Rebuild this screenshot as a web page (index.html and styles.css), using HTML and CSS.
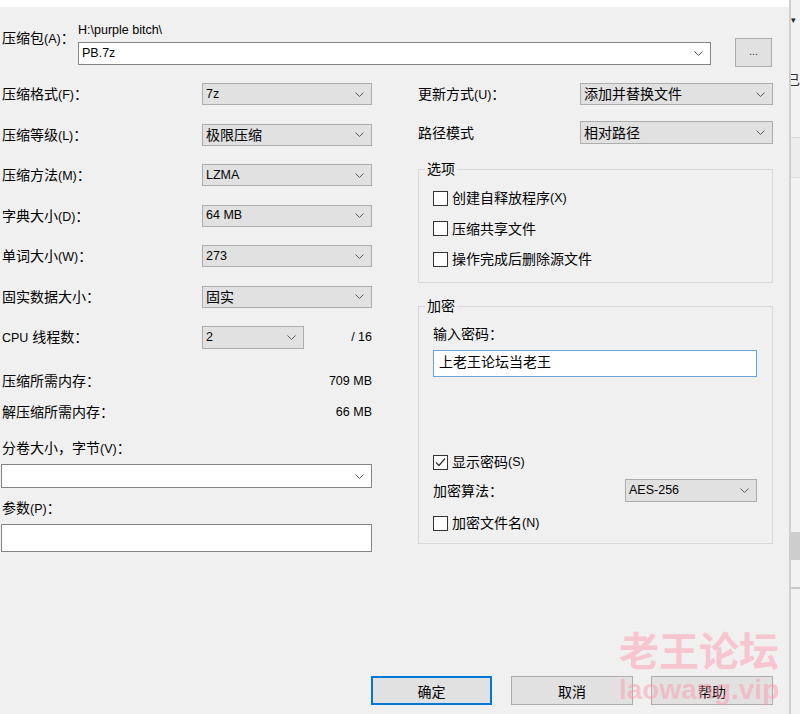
FILE: index.html
```html
<!DOCTYPE html>
<html lang="zh-CN">
<head>
<meta charset="utf-8">
<title>添加到压缩包</title>
<link rel="stylesheet" href="styles.css">
</head>
<body>
<div class="dialog">
  <div class="titlebar"></div>
  <div class="content">
    <div class="archive-row">
      <div class="archive-label">压缩包<span class="en">(A)</span>：</div>
      <div class="archive-field">
        <div class="path en">H:\purple bitch\</div>
        <div class="combo"><span class="en">PB.7z</span><svg class="chev" width="9" height="5" viewBox="0 0 9 5"><polyline points="0.5,0.5 4.5,4.5 8.5,0.5"/></svg></div>
      </div>
      <button class="browse">...</button>
    </div>

    <div class="columns">
      <div class="left">
        <div class="settings">
          <div class="lbl">压缩格式<span class="en">(F)</span>：</div>
          <div class="select"><span class="en">7z</span><svg class="chev" width="9" height="5" viewBox="0 0 9 5"><polyline points="0.5,0.5 4.5,4.5 8.5,0.5"/></svg></div>
          <div class="lbl">压缩等级<span class="en">(L)</span>：</div>
          <div class="select"><span>极限压缩</span><svg class="chev" width="9" height="5" viewBox="0 0 9 5"><polyline points="0.5,0.5 4.5,4.5 8.5,0.5"/></svg></div>
          <div class="lbl">压缩方法<span class="en">(M)</span>：</div>
          <div class="select"><span class="en">LZMA</span><svg class="chev" width="9" height="5" viewBox="0 0 9 5"><polyline points="0.5,0.5 4.5,4.5 8.5,0.5"/></svg></div>
          <div class="lbl">字典大小<span class="en">(D)</span>：</div>
          <div class="select"><span class="en">64 MB</span><svg class="chev" width="9" height="5" viewBox="0 0 9 5"><polyline points="0.5,0.5 4.5,4.5 8.5,0.5"/></svg></div>
          <div class="lbl">单词大小<span class="en">(W)</span>：</div>
          <div class="select"><span class="en">273</span><svg class="chev" width="9" height="5" viewBox="0 0 9 5"><polyline points="0.5,0.5 4.5,4.5 8.5,0.5"/></svg></div>
          <div class="lbl">固实数据大小：</div>
          <div class="select"><span>固实</span><svg class="chev" width="9" height="5" viewBox="0 0 9 5"><polyline points="0.5,0.5 4.5,4.5 8.5,0.5"/></svg></div>
          <div class="lbl"><span class="en">CPU</span> 线程数：</div>
          <div class="cpu">
            <div class="select small"><span class="en">2</span><svg class="chev" width="9" height="5" viewBox="0 0 9 5"><polyline points="0.5,0.5 4.5,4.5 8.5,0.5"/></svg></div>
            <span class="en">/ 16</span>
          </div>
        </div>

        <div class="mem-row first"><span>压缩所需内存：</span><span class="en">709 MB</span></div>
        <div class="mem-row second"><span>解压缩所需内存：</span><span class="en">66 MB</span></div>

        <div class="vol-label">分卷大小，字节<span class="en">(V)</span>：</div>
        <div class="combo vol"><span></span><svg class="chev" width="9" height="5" viewBox="0 0 9 5"><polyline points="0.5,0.5 4.5,4.5 8.5,0.5"/></svg></div>
        <div class="param-label">参数<span class="en">(P)</span>：</div>
        <div class="textbox param"></div>
      </div>

      <div class="right">
        <div class="right-row">
          <span>更新方式<span class="en">(U)</span>：</span>
          <div class="select wide"><span>添加并替换文件</span><svg class="chev" width="9" height="5" viewBox="0 0 9 5"><polyline points="0.5,0.5 4.5,4.5 8.5,0.5"/></svg></div>
        </div>
        <div class="right-row second">
          <span>路径模式</span>
          <div class="select wide"><span>相对路径</span><svg class="chev" width="9" height="5" viewBox="0 0 9 5"><polyline points="0.5,0.5 4.5,4.5 8.5,0.5"/></svg></div>
        </div>

        <fieldset class="options">
          <legend>选项</legend>
          <div class="check-row first"><span class="box"></span>创建自释放程序<span class="en">(X)</span></div>
          <div class="check-row"><span class="box"></span>压缩共享文件</div>
          <div class="check-row"><span class="box"></span>操作完成后删除源文件</div>
        </fieldset>

        <fieldset class="encrypt">
          <legend>加密</legend>
          <div class="pw-label">输入密码：</div>
          <div class="textbox pw">上老王论坛当老王</div>
          <div class="check-row show"><span class="box"><svg width="13" height="13" viewBox="0 0 13 13"><polyline points="2,6.5 5,9.5 11,2.5"/></svg></span>显示密码<span class="en">(S)</span></div>
          <div class="algo-row">
            <span>加密算法：</span>
            <div class="select algo"><span class="en">AES-256</span><svg class="chev" width="9" height="5" viewBox="0 0 9 5"><polyline points="0.5,0.5 4.5,4.5 8.5,0.5"/></svg></div>
          </div>
          <div class="check-row names"><span class="box"></span>加密文件名<span class="en">(N)</span></div>
        </fieldset>
      </div>
    </div>

    <div class="buttons">
      <button class="btn ok">确定</button>
      <button class="btn">取消</button>
      <button class="btn">帮助</button>
    </div>
  </div>
</div>

<div class="side">
  <div class="side-top">
    <div class="tri">▾</div>
    <div class="cut">已表</div>
  </div>
  <div class="side-band"></div>
  <div class="side-mid"></div>
  <div class="thumb"></div>
  <div class="side-low"></div>
</div>

<div class="watermark">
  <div class="wm-cn">老王论坛</div>
  <div class="wm-en">laowang.vip</div>
</div>
</body>
</html>
```

FILE: styles.css
```css
* { box-sizing: border-box; }

html, body { margin: 0; }

body {
  width: 800px;
  height: 714px;
  overflow: hidden;
  position: relative;
  display: flex;
  background: #f0f0f0;
  color: #000;
  font-family: "Liberation Sans", "Noto Sans CJK SC", sans-serif;
  font-size: 14px;
  line-height: 18px;
}

.en { font-size: 12.5px; line-height: 1; }

.dialog { width: 789px; flex: none; }

.titlebar { height: 7px; background: #fff; }

.content { padding: 15px 16px 0 0; }

/* archive row */
.archive-row { display: flex; align-items: flex-start; }
.archive-label { width: 78px; height: 25px; padding: 7px 0 0 2px; }
.archive-field { width: 633px; }
.path { height: 16px; line-height: 16px; margin-bottom: 4px; }

.combo {
  height: 23px;
  background: #fff;
  border: 1px solid #858585;
  display: flex;
  align-items: center;
  justify-content: space-between;
  padding: 0 7px 0 3px;
}

.chev { flex: none; }
.chev polyline { fill: none; stroke: #5a5a5a; stroke-width: 1; }

.browse {
  margin: 16px 0 0 24px;
  width: 37px;
  height: 29px;
  padding: 0 0 4px;
  background: #e1e1e1;
  border: 1px solid #adadad;
  font-family: "Liberation Sans", sans-serif;
  font-size: 11px;
  color: #333;
}

/* columns */
.columns { display: flex; margin-top: 16px; }

.left { width: 371px; margin-left: 1px; flex: none; }

.settings {
  display: grid;
  grid-template-columns: 201px 170px;
  grid-auto-rows: 22px;
  row-gap: 18.5px;
  align-items: center;
}

.lbl { padding-left: 1px; height: 18px; }

.select {
  height: 22px;
  background: #e1e1e1;
  border: 1px solid #adadad;
  display: flex;
  align-items: center;
  justify-content: space-between;
  padding: 0 7px 0 3px;
  white-space: nowrap;
}

.cpu { display: flex; align-items: center; justify-content: space-between; }
.select.small { width: 102px; height: 23px; }

.mem-row { display: flex; align-items: center; justify-content: space-between; height: 18px; padding-left: 1px; }
.mem-row.first { margin-top: 24px; }
.mem-row.second { margin-top: 13px; }

.vol-label { margin-top: 18px; height: 18px; padding-left: 1px; }
.combo.vol { margin-top: 7px; height: 24px; }
.param-label { margin-top: 11px; height: 18px; padding-left: 1px; }

.textbox { background: #fff; border: 1px solid #858585; }
.textbox.param { margin-top: 7px; height: 28px; }

/* right column */
.right { width: 355px; margin-left: 46px; flex: none; }

.right-row {
  display: flex;
  align-items: center;
  justify-content: space-between;
  height: 22px;
}
.right-row.second { margin-top: 16px; height: 23px; }
.select.wide { width: 193px; height: 100%; }

fieldset {
  margin: 0;
  min-width: 0;
  border: 1px solid #d9d9d9;
}

legend {
  margin-left: -8px;
  padding: 0 2px;
  height: 18px;
  line-height: 18px;
}

.options { margin-top: 16px; padding: 0 0 14px 14px; }

.check-row {
  display: flex;
  align-items: center;
  height: 18px;
  margin-top: 12.5px;
}
.check-row.first { margin-top: 11px; }

.box {
  width: 15px;
  height: 15px;
  flex: none;
  margin-right: 4px;
  background: #fff;
  border: 1px solid #333;
  display: flex;
  align-items: center;
  justify-content: center;
}
.box svg polyline { fill: none; stroke: #333; stroke-width: 1.2; }

.encrypt { margin-top: 14px; padding: 0 15px 11px 14px; }

.pw-label { margin-top: 10px; height: 18px; }

.textbox.pw {
  margin-top: 7px;
  height: 27px;
  border-color: #6aa2de;
  padding: 2px 5px 0;
  line-height: 18px;
}

.check-row.show { margin-top: 76px; }

.algo-row {
  display: flex;
  align-items: center;
  justify-content: space-between;
  height: 23px;
  margin-top: 8px;
}
.select.algo { width: 132px; height: 23px; }

.check-row.names { margin-top: 12px; }

/* buttons */
.buttons {
  display: flex;
  justify-content: flex-end;
  gap: 18px;
  margin-top: 124px;
}

.btn {
  width: 122px;
  height: 29px;
  padding: 0;
  background: #e1e1e1;
  border: 1px solid #adadad;
  font-family: "Liberation Sans", "Noto Sans CJK SC", sans-serif;
  font-size: 14px;
  color: #000;
}
.btn.ok { width: 121px; border: 2px solid #0078d7; margin-right: 1px; }

/* neighbouring window strip */
.side {
  flex: 1;
  border-left: 2px solid #cfcfcf;
  background: #f2f2f2;
  overflow: hidden;
}
.side-top { height: 123px; border-bottom: 1px solid #d6d6d6; }
.tri { font-size: 9px; line-height: 10px; margin: 15px 0 0 0; color: #222; }
.cut { margin: 46px 0 0 -5px; white-space: nowrap; color: #333; }
.side-band { height: 40px; border-bottom: 1px solid #dcdcdc; background: #ededed; }
.side-mid { height: 354px; }
.thumb { height: 28px; background: #cdcdcd; }
.side-low { height: 29px; border-bottom: 2px solid #c8c8c8; }

/* watermark overlay */
.watermark {
  position: absolute;
  left: 619px;
  top: 624px;
  color: rgba(255, 150, 170, 0.47);
  font-weight: bold;
  pointer-events: none;
}
.wm-cn {
  font-family: "Noto Sans CJK SC", sans-serif;
  font-size: 40px;
  line-height: 50px;
}
.wm-en {
  font-family: "Liberation Sans", sans-serif;
  font-size: 28px;
  line-height: 32px;
}
```
